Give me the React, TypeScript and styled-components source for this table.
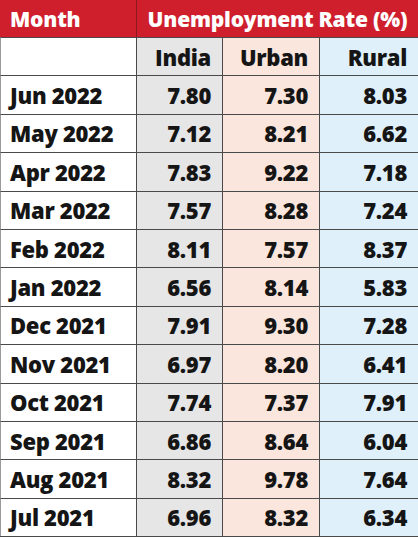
import styled, { createGlobalStyle } from 'styled-components';

const GlobalStyle = createGlobalStyle`
  html, body {
    margin: 0;
    padding: 0;
    background: #ffffff;
  }
  body {
    font-family: "Open Sans", "Liberation Sans", sans-serif;
  }
`;

const Table = styled.div`
  width: 418px;
  display: grid;
  grid-template-columns: 136px 86px 97px 99px;
  border-bottom: 2px solid #4a4a4a;
  box-sizing: border-box;
`;

const HeaderCell = styled.div<{ $span?: number; $center?: boolean }>`
  grid-column: span ${p => p.$span ?? 1};
  height: 37px;
  background: #cf1f2d;
  color: #ffffff;
  font-weight: 800;
  font-size: 21px;
  letter-spacing: -0.2px;
  display: flex;
  align-items: center;
  justify-content: ${p => (p.$center ? 'center' : 'flex-start')};
  padding: 0 10px;
  box-sizing: border-box;
  border-left: ${p => (p.$center ? '1px solid #8a1a20' : 'none')};
`;

const palette: Record<string, string> = {
  india: '#e6e6e7',
  urban: '#fbe6dd',
  rural: '#dff0fa',
  month: '#ffffff',
};

const Cell = styled.div<{ $tone: string }>`
  height: 38.4px;
  background: ${p => palette[p.$tone]};
  color: #151515;
  font-weight: 800;
  font-size: 22px;
  letter-spacing: -0.3px;
  display: flex;
  align-items: center;
  justify-content: ${p => (p.$tone === 'month' ? 'flex-start' : 'flex-end')};
  padding: ${p => (p.$tone === 'month' ? '0 0 0 9px' : '0 11px 0 0')};
  box-sizing: border-box;
  border-top: 1px solid #4a4a4a;
  border-left: ${p => (p.$tone === 'month' ? '1px solid #9a9a9a' : '1px solid #4a4a4a')};
`;

const rows = [
  ['Jun 2022', '7.80', '7.30', '8.03'],
  ['May 2022', '7.12', '8.21', '6.62'],
  ['Apr 2022', '7.83', '9.22', '7.18'],
  ['Mar 2022', '7.57', '8.28', '7.24'],
  ['Feb 2022', '8.11', '7.57', '8.37'],
  ['Jan 2022', '6.56', '8.14', '5.83'],
  ['Dec 2021', '7.91', '9.30', '7.28'],
  ['Nov 2021', '6.97', '8.20', '6.41'],
  ['Oct 2021', '7.74', '7.37', '7.91'],
  ['Sep 2021', '6.86', '8.64', '6.04'],
  ['Aug 2021', '8.32', '9.78', '7.64'],
  ['Jul 2021', '6.96', '8.32', '6.34'],
];

const tones = ['month', 'india', 'urban', 'rural'];

export default function App() {
  return (
    <>
      <GlobalStyle />
      <Table>
        <HeaderCell>Month</HeaderCell>
        <HeaderCell $span={3} $center>
          Unemployment Rate (%)
        </HeaderCell>
        <Cell $tone="month" />
        <Cell $tone="india">India</Cell>
        <Cell $tone="urban">Urban</Cell>
        <Cell $tone="rural">Rural</Cell>
        {rows.map(r =>
          r.map((v, i) => (
            <Cell key={r[0] + i} $tone={tones[i]}>
              {v}
            </Cell>
          ))
        )}
      </Table>
    </>
  );
}
